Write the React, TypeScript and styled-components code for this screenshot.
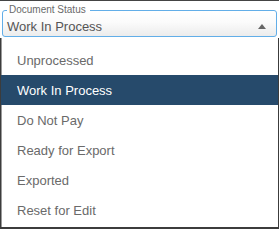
import React from "react";
import styled, { createGlobalStyle } from "styled-components";

const Global = createGlobalStyle`
  * { box-sizing: border-box; }
  html, body { margin: 0; padding: 0; background: #fff; }
  body { font-family: "Liberation Sans", Arial, sans-serif; }
`;

const Frame = styled.div`
  width: 279px;
  height: 229px;
  border-top: 1px solid #444;
  display: flex;
  flex-direction: column;
  overflow: hidden;
`;

const Header = styled.div`
  padding: 3px 2px 1px 2px;
`;

const Field = styled.fieldset`
  margin: 0;
  padding: 3px 6px 1px 4px;
  border: 1px solid #62aee8;
  border-radius: 3px;
  background: linear-gradient(#ffffff 0%, #fbfbfb 45%, #ececec 100%);
  min-width: 0;
`;

const Legend = styled.legend`
  padding: 0 4px 0 2px;
  font-size: 10px;
  line-height: 12px;
  color: #6a6a6a;
`;

const ValueRow = styled.div`
  display: flex;
  align-items: center;
  justify-content: space-between;
  height: 16px;
`;

const Value = styled.span`
  font-size: 13px;
  line-height: 16px;
  color: #555;
`;

const Arrow = styled.span`
  width: 0;
  height: 0;
  margin-right: 4px;
  margin-top: -1px;
  border-left: 4px solid transparent;
  border-right: 4px solid transparent;
  border-bottom: 5px solid #666;
`;

const Menu = styled.ul`
  list-style: none;
  margin: 0;
  padding: 7px 0 0 0;
  flex: 1;
  border-left: 1px solid #3c3c3c;
  border-right: 1px solid #3c3c3c;
  border-bottom: 2px solid #3c3c3c;
  box-shadow: inset 1px 0 0 #9a9a9a;
`;

const Item = styled.li<{ $active?: boolean }>`
  height: 30px;
  display: flex;
  align-items: center;
  padding-left: 16px;
  padding-top: 1px;
  font-size: 13px;
  color: ${(p) => (p.$active ? "#ffffff" : "#6a6a6a")};
  background: ${(p) => (p.$active ? "#264a6b" : "transparent")};
`;

const options = [
  "Unprocessed",
  "Work In Process",
  "Do Not Pay",
  "Ready for Export",
  "Exported",
  "Reset for Edit",
];

export default function App() {
  const selected = "Work In Process";
  return (
    <>
      <Global />
      <Frame>
        <Header>
          <Field>
            <Legend>Document Status</Legend>
            <ValueRow>
              <Value>{selected}</Value>
              <Arrow />
            </ValueRow>
          </Field>
        </Header>
        <Menu>
          {options.map((o) => (
            <Item key={o} $active={o === selected}>
              {o}
            </Item>
          ))}
        </Menu>
      </Frame>
    </>
  );
}
